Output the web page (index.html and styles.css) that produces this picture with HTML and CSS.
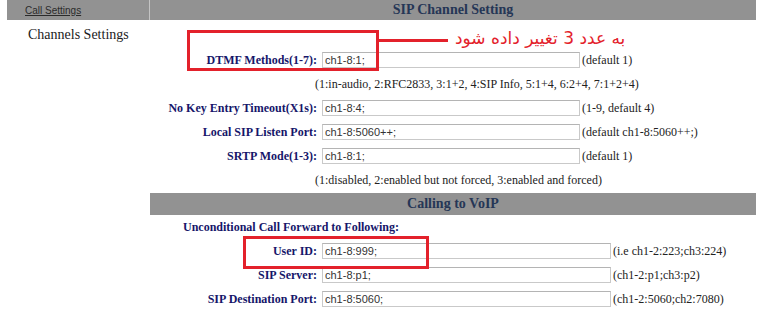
FILE: index.html
```html
<!DOCTYPE html>
<html lang="en">

<head>
    <meta charset="utf-8">
    <title>SIP Channel Setting</title>
    <link rel="stylesheet" href="styles.css">
</head>

<body>
    <div id="page">
        <div id="head">
            <div id="head-nav"><a href="#">Call Settings</a></div>
            <div id="head-title">SIP Channel Setting</div>
        </div>
        <div id="content">
            <div id="side">Channels Settings</div>
            <div id="main">
                <div class="row">
                    <label class="lbl">DTMF Methods(1-7):</label>
                    <input class="field" type="text" value="ch1-8:1;">
                    <span class="note">(default 1)</span>
                </div>
                <div class="hint">(1:in-audio, 2:RFC2833, 3:1+2, 4:SIP Info, 5:1+4, 6:2+4, 7:1+2+4)</div>
                <div class="row">
                    <label class="lbl">No Key Entry Timeout(X1s):</label>
                    <input class="field" type="text" value="ch1-8:4;">
                    <span class="note">(1-9, default 4)</span>
                </div>
                <div class="row">
                    <label class="lbl">Local SIP Listen Port:</label>
                    <input class="field" type="text" value="ch1-8:5060++;">
                    <span class="note">(default ch1-8:5060++;)</span>
                </div>
                <div class="row">
                    <label class="lbl">SRTP Mode(1-3):</label>
                    <input class="field" type="text" value="ch1-8:1;">
                    <span class="note">(default 1)</span>
                </div>
                <div class="hint">(1:disabled, 2:enabled but not forced, 3:enabled and forced)</div>

                <div class="bar">Calling to VoIP</div>
                <div class="sub">Unconditional Call Forward to Following:</div>
                <div class="row">
                    <label class="lbl">User ID:</label>
                    <input class="field wide" type="text" value="ch1-8:999;">
                    <span class="note">(i.e ch1-2:223;ch3:224)</span>
                </div>
                <div class="row">
                    <label class="lbl">SIP Server:</label>
                    <input class="field wide" type="text" value="ch1-8:p1;">
                    <span class="note">(ch1-2:p1;ch3:p2)</span>
                </div>
                <div class="row">
                    <label class="lbl">SIP Destination Port:</label>
                    <input class="field wide" type="text" value="ch1-8:5060;">
                    <span class="note">(ch1-2:5060;ch2:7080)</span>
                </div>
            </div>
        </div>

        <!-- annotations drawn over the screenshot -->
        <div class="mark mark-dtmf"></div>
        <div class="arrow"></div>
        <div class="remark" dir="rtl">به عدد 3 تغییر داده شود</div>
        <div class="mark mark-user"></div>
    </div>
</body>

</html>
```

FILE: styles.css
```css
body {
    margin: 0;
    font-family: "Liberation Serif", serif;
    background-color: white;
}

#page {
    position: relative;
    width: 768px;
    height: 335px;
}

#head {
    display: flex;
    margin-left: 7px;
    width: 749px;
    height: 20px;
    background-color: #929292;
}

#head-nav {
    width: 143px;
    border-right: 1px solid #c4c4c4;
    display: flex;
    align-items: center;
    padding-left: 18px;
    box-sizing: border-box;
}

#head-nav a {
    font-family: "Liberation Sans", sans-serif;
    font-size: 10px;
    color: #2b2b2b;
}

#head-title {
    flex: 1;
    text-align: center;
    line-height: 20px;
    font-size: 14px;
    font-weight: bold;
    color: #253656;
}

#content {
    display: flex;
    margin-left: 7px;
    width: 749px;
}

#side {
    width: 143px;
    padding-left: 21px;
    padding-top: 7px;
    box-sizing: border-box;
    font-size: 14px;
    color: #1b1b1b;
}

#main {
    flex: 1;
    padding-top: 28px;
}

.row {
    display: flex;
    align-items: center;
    height: 24px;
}

.lbl {
    width: 167px;
    text-align: right;
    font-size: 12px;
    font-weight: bold;
    color: #16166a;
}

.field {
    width: 258px;
    height: 16px;
    margin-left: 5px;
    padding: 0 2px;
    box-sizing: border-box;
    border: 1px solid #c9c9c9;
    border-top-color: #b4b4b4;
    font-family: "Liberation Sans", sans-serif;
    font-size: 11px;
    color: #333;
}

.field.wide {
    width: 289px;
}

.note {
    padding-left: 2px;
    font-size: 12px;
    color: #222;
}

.hint {
    height: 24px;
    line-height: 24px;
    padding-left: 165px;
    font-size: 12px;
    color: #222;
}

.bar {
    margin-top: 1px;
    height: 22px;
    line-height: 22px;
    text-align: center;
    background-color: #929292;
    font-size: 14px;
    font-weight: bold;
    color: #253656;
}

.sub {
    height: 24px;
    line-height: 24px;
    padding-left: 33px;
    font-size: 12px;
    font-weight: bold;
    color: #16166a;
}

.mark {
    position: absolute;
    border: 3px solid #e3212b;
    box-sizing: border-box;
}

.mark-dtmf {
    left: 187px;
    top: 30px;
    width: 192px;
    height: 41px;
}

.mark-user {
    left: 243px;
    top: 236px;
    width: 186px;
    height: 33px;
}

.arrow {
    position: absolute;
    left: 378px;
    top: 39px;
    width: 70px;
    height: 3px;
    background-color: #e3212b;
}

.remark {
    position: absolute;
    left: 455px;
    top: 24px;
    font-family: "DejaVu Sans", sans-serif;
    font-size: 17px;
    line-height: 28px;
    white-space: nowrap;
    color: #e3212b;
}
```
